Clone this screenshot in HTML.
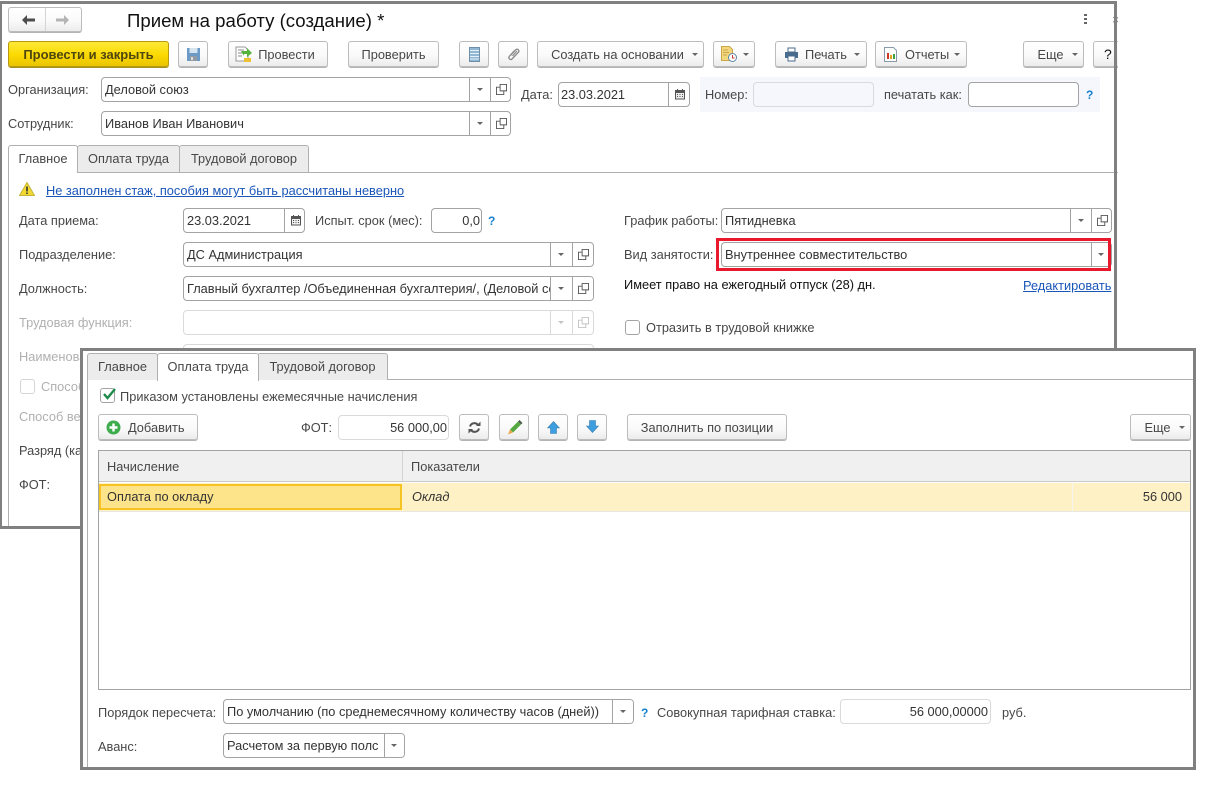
<!DOCTYPE html>
<html><head><meta charset="utf-8"><style>
html,body{margin:0;padding:0;background:#fff}
body{width:1214px;height:790px;position:relative;overflow:hidden;font-family:"Liberation Sans",sans-serif;font-size:12.800px;color:#474747}
div,span.a,svg.a{position:absolute;box-sizing:border-box}
.t{white-space:nowrap;line-height:16px;height:16px;margin-top:1px}
.d{color:#222}
.g{color:#b0b0b0}
.f{border:1px solid #a3a3a3;border-radius:4px;background:#fff;height:25px;color:#333;line-height:23px;padding-left:3px;white-space:nowrap;overflow:hidden}
.fd{border-color:#d9dadc}
.s{width:1px;top:0;bottom:0;background:#a3a3a3}
.fd .s{background:#d9dadc}
.ar{width:0;height:0;border-left:3px solid transparent;border-right:3px solid transparent;border-top:3px solid #666;top:10px}
.fd .ar{border-top-color:#c4c4c4}
.b{height:26px;border:1px solid #bcbcbc;border-radius:3px;background:linear-gradient(#fff,#fafafa 55%,#ececec);box-shadow:0 1px 0 #b4b4b4;line-height:25px;text-align:center;white-space:nowrap;color:#474747;top:41px}
.ba{width:0;height:0;border-left:3px solid transparent;border-right:3px solid transparent;border-top:3px solid #666;top:11px}
.tab{border:1px solid #b0b0b0;border-bottom:none;border-radius:3px 3px 0 0;background:#ececec;text-align:center;line-height:25px;height:27px;white-space:nowrap;color:#474747}
.act{background:#fff}
.lnk{color:#1a56b8;text-decoration:underline}
.q{color:#1581cf;font-weight:bold;font-size:12px}
svg{display:block}
</style></head><body>
<svg width="0" height="0" style="position:absolute"><defs>
<symbol id="op" viewBox="0 0 12 12"><path d="M4.500 .5h7v7h-7z M4.500 3.500h-4v8h8v-4" fill="none" stroke="#555" stroke-width="1"/></symbol>
<symbol id="cal" viewBox="0 0 12 12"><path d="M1 2h10v9.500h-10z" fill="#555"/><path d="M2 5h8v5.500h-8z" fill="#eee"/><path d="M3 1h1v2h-1zM8 1h1v2h-1z" fill="#555"/><path d="M3 6h1v1h-1zM5.500 6h1v1h-1zM8 6h1v1h-1zM3 8h1v1h-1zM5.500 8h1v1h-1zM8 8h1v1h-1z" fill="#555"/></symbol>
</defs></svg>

<!-- main window -->
<div style="left:0;top:0;width:1118px;height:529px;overflow:hidden;z-index:0">
<div class="b" style="left:8px;top:7px;width:74px;height:25px"><div style="left:36px;top:0;bottom:0;width:1px;background:#d4d4d4"></div>
<svg class="a" style="left:12px;top:6px" width="15" height="12"><path d="M1 6l5-5v3.500h8v3h-8v3.500z" fill="#4d4d4d"/></svg>
<svg class="a" style="left:46px;top:6px" width="15" height="12"><path d="M14 6l-5-5v3.500h-8v3h8v3.500z" fill="#b4b4b4"/></svg></div>
<div class="t" style="left:127px;top:9px;font-size:18.600px;line-height:22px;height:22px;color:#111">Прием на работу (создание) *</div>
<svg class="a" style="left:1083px;top:13px" width="5" height="12"><path d="M1 1h3v2h-3zM1 5h3v2h-3zM1 9h3v2h-3z" fill="#666"/></svg>
<div class="t" style="left:1112px;top:11px;color:#888">×</div>

<div class="b" style="left:8px;width:161px;background:linear-gradient(#fee93a,#fbd900 55%,#eac400);border-color:#b89a10;box-shadow:0 1px 0 #a89020;font-weight:bold;font-size:13px;color:#4f4610">Провести и закрыть</div>
<div class="b" style="left:178px;width:30px"><svg class="a" style="left:7px;top:5px" width="15" height="15"><path d="M1 1h13v13h-13z" fill="#6c9ac6"/><path d="M3.500 1h8v5h-8z" fill="#d6e4f0"/><path d="M4 9h7v5h-7z" fill="#8f9aa3"/><path d="M5 10h2v3h-2z" fill="#ddd"/></svg></div>
<div class="b" style="left:228px;width:100px;padding-left:17px"><svg class="a" style="left:6px;top:4px" width="17" height="17"><path d="M1 1h9l3 3v11h-12z" fill="#fff" stroke="#9a9a9a"/><path d="M3 4h6M3 7h5M3 10h4" stroke="#888"/><path d="M6 5h6v-3l5 5-5 4v-3h-3v2z" fill="#55b33c"/><path d="M9 12h7v4h-7z" fill="#eac234"/></svg>Провести</div>
<div class="b" style="left:348px;width:91px">Проверить</div>
<div class="b" style="left:459px;width:30px"><svg class="a" style="left:9px;top:5px" width="11" height="15"><path d="M.5 .5h10v14h-10z" fill="#90b8d4" stroke="#6f8fa8"/><path d="M1 3.500h9M1 6.500h9M1 9.500h9M1 12h9" stroke="#e6f0f6"/></svg></div>
<div class="b" style="left:498px;width:30px"><svg class="a" style="left:8px;top:5px" width="14" height="14"><path d="M3.500 8.500l5-5.500c2-2 4.500 .5 2.800 2.500l-6.300 6.500c-1.500 1.500-4-.5-2.800-2.500l5.300-6M5.500 9l4.500-5" fill="none" stroke="#8a8a8a" stroke-width="1.300"/></svg></div>
<div class="b" style="left:537px;width:167px;padding-right:6px">Создать на основании<div class="ba" style="left:154px"></div></div>
<div class="b" style="left:713px;width:42px"><svg class="a" style="left:7px;top:4px" width="16" height="16"><path d="M.5 .5h8l3 3v11h-11z" fill="#f3d77e" stroke="#c9a64a"/><path d="M2 4h5M2 6.500h6M2 9h4" stroke="#c9a64a"/><circle cx="11.500" cy="11.500" r="4" fill="#fff" stroke="#5f87a8"/><path d="M11.500 9v3h2" stroke="#c33" fill="none"/></svg><div class="ba" style="left:29px"></div></div>
<div class="b" style="left:775px;width:92px;text-align:left;padding-left:29px"><svg class="a" style="left:8px;top:5px" width="15" height="15"><path d="M4 1h7v4h-7z" fill="#fff" stroke="#4a6c8c"/><path d="M1 5h13v6h-13z" fill="#4a6c8c"/><path d="M4 9h7v5h-7z" fill="#fff" stroke="#4a6c8c"/></svg>Печать<div class="ba" style="left:78px"></div></div>
<div class="b" style="left:875px;width:92px;text-align:left;padding-left:29px"><svg class="a" style="left:8px;top:5px" width="14" height="15"><path d="M.5 .5h9l3 3v11h-12z" fill="#fff" stroke="#8a9aa8"/><path d="M3 6h2v6h-2z" fill="#cc3a2a"/><path d="M6 8h2v4h-2z" fill="#e0a020"/><path d="M9 7h2v5h-2z" fill="#3da23d"/></svg>Отчеты<div class="ba" style="left:78px"></div></div>
<div class="b" style="left:1023px;width:61px;padding-right:6px">Еще<div class="ba" style="left:48px"></div></div>
<div class="b" style="left:1093px;width:40px;text-align:left;padding-left:10px;color:#111;font-size:14px;">?</div>

<div class="t" style="left:8px;top:81px">Организация:</div>
<div class="f" style="left:101px;top:77px;width:410px">Деловой союз<div class="s" style="left:367px"></div><div class="ar" style="left:375px"></div><div class="s" style="left:388px"></div><svg class="a" style="left:394px;top:6px" width="11" height="11"><use href="#op"/></svg></div>
<div class="t" style="left:8px;top:115px">Сотрудник:</div>
<div class="f" style="left:101px;top:111px;width:410px">Иванов Иван Иванович<div class="s" style="left:367px"></div><div class="ar" style="left:375px"></div><div class="s" style="left:388px"></div><svg class="a" style="left:394px;top:6px" width="11" height="11"><use href="#op"/></svg></div>
<div class="t" style="left:521px;top:86px">Дата:</div>
<div class="f" style="left:558px;top:82px;width:132px;padding-left:2px">23.03.2021<div class="s" style="left:109px"></div><svg class="a" style="left:115px;top:5px" width="12" height="12"><use href="#cal"/></svg></div>
<div style="left:700px;top:77px;width:400px;height:35px;background:#f6f7fc"></div>
<div class="t" style="left:705px;top:86px">Номер:</div>
<div class="f fd" style="left:753px;top:82px;width:121px;background:#f6f7fc"></div>
<div class="t" style="left:884px;top:86px">печатать как:</div>
<div class="f" style="left:968px;top:82px;width:111px"></div>
<div class="t q" style="left:1086px;top:86px">?</div>

<div style="left:8px;top:172px;width:1110px;height:1px;background:#b0b0b0"></div>
<div style="left:8px;top:172px;width:1px;height:360px;background:#b0b0b0"></div>
<div class="tab act" style="left:8px;top:145px;width:70px;height:28px;z-index:2">Главное</div>
<div class="tab" style="left:77px;top:145px;width:103px">Оплата труда</div>
<div class="tab" style="left:179px;top:145px;width:130px">Трудовой договор</div>

<svg class="a" style="left:19px;top:182px" width="16" height="14"><path d="M8 .5l7.500 13h-15z" fill="#f2d930" stroke="#c4b33a"/><path d="M7.200 4.500h1.600v5h-1.600zM7.200 10.500h1.600v1.500h-1.600z" fill="#333"/></svg>
<div class="t lnk" style="left:46px;top:182px">Не заполнен стаж, пособия могут быть рассчитаны неверно</div>

<div class="t" style="left:19px;top:212px">Дата приема:</div>
<div class="f" style="left:183px;top:208px;width:122px">23.03.2021<div class="s" style="left:100px"></div><svg class="a" style="left:106px;top:5px" width="12" height="12"><use href="#cal"/></svg></div>
<div class="t" style="left:315px;top:212px">Испыт. срок (мес):</div>
<div class="f" style="left:431px;top:208px;width:51px;text-align:right;padding-right:1px">0,0</div>
<div class="t q" style="left:488px;top:212px">?</div>

<div class="t" style="left:19px;top:246px">Подразделение:</div>
<div class="f" style="left:183px;top:242px;width:411px">ДС Администрация<div class="s" style="left:366px"></div><div class="ar" style="left:374px"></div><div class="s" style="left:388px"></div><svg class="a" style="left:394px;top:6px" width="11" height="11"><use href="#op"/></svg></div>
<div class="t" style="left:19px;top:280px">Должность:</div>
<div class="f" style="left:183px;top:276px;width:411px">Главный бухгалтер /Объединенная бухгалтерия/, (Деловой союз)<div style="left:366px;top:0;bottom:0;width:44px;background:#fff"></div><div class="s" style="left:366px"></div><div class="ar" style="left:374px"></div><div class="s" style="left:388px"></div><svg class="a" style="left:394px;top:6px" width="11" height="11"><use href="#op"/></svg></div>
<div class="t g" style="left:19px;top:314px">Трудовая функция:</div>
<div class="f fd" style="left:183px;top:310px;width:411px"><div class="s" style="left:366px"></div><div class="ar" style="left:374px"></div><div class="s" style="left:388px"></div><svg class="a" style="left:394px;top:6px;opacity:.35" width="11" height="11"><use href="#op"/></svg></div>
<div class="t g" style="left:19px;top:348px">Наименование:</div>
<div class="f fd" style="left:183px;top:344px;width:411px"></div>
<div style="left:20px;top:379px;width:15px;height:15px;border:1px solid #d4d4d4;border-radius:3px"></div>
<div class="t g" style="left:41px;top:378px">Способ</div>
<div class="t g" style="left:19px;top:408px">Способ ве</div>
<div class="t" style="left:19px;top:442px">Разряд (ка</div>
<div class="t" style="left:19px;top:476px">ФОТ:</div>

<div class="t" style="left:624px;top:212px">График работы:</div>
<div class="f" style="left:721px;top:208px;width:391px">Пятидневка<div class="s" style="left:348px"></div><div class="ar" style="left:356px"></div><div class="s" style="left:369px"></div><svg class="a" style="left:375px;top:6px" width="11" height="11"><use href="#op"/></svg></div>
<div class="t" style="left:624px;top:246px">Вид занятости:</div>
<div class="f" style="left:721px;top:242px;width:391px">Внутреннее совместительство<div class="s" style="left:369px"></div><div class="ar" style="left:376px"></div></div>
<div style="left:716px;top:238px;width:395px;height:33px;border:3px solid #e8192c"></div>
<div class="t" style="left:624px;top:276px;color:#111">Имеет право на ежегодный отпуск (28) дн.</div>
<div class="t lnk" style="left:1023px;top:277px">Редактировать</div>
<div style="left:625px;top:320px;width:15px;height:15px;border:1px solid #a3a3a3;border-radius:3px"></div>
<div class="t" style="left:646px;top:319px">Отразить в трудовой книжке</div>

<div style="left:0;top:1px;width:1117px;height:528px;border:3px solid #808080;border-left-width:2px;z-index:3"></div>
</div>

<!-- popup -->
<div style="left:80px;top:348px;width:1116px;height:422px;background:#fff"></div>
<div style="left:87px;top:379px;width:1px;height:389px;background:#b0b0b0"></div>
<div style="left:87px;top:379px;width:1107px;height:1px;background:#b0b0b0"></div>
<div class="tab" style="left:87px;top:353px;width:71px">Главное</div>
<div class="tab" style="left:257px;top:353px;width:131px">Трудовой договор</div>
<div class="tab act" style="left:157px;top:353px;width:102px;height:28px">Оплата труда</div>

<div style="left:100px;top:388px;width:15px;height:15px;border:1px solid #a3a3a3;border-radius:3px"></div>
<svg class="a" style="left:101px;top:387px" width="16" height="15"><path d="M3 7l3.500 4L14 2" fill="none" stroke="#1e8a4a" stroke-width="2.400"/></svg>
<div class="t" style="left:120px;top:388px">Приказом установлены ежемесячные начисления</div>

<div class="b" style="left:98px;top:414px;width:100px;text-align:left;padding-left:29px"><svg class="a" style="left:7px;top:5px" width="15" height="15"><circle cx="7.500" cy="7.500" r="7" fill="#3eac4c"/><path d="M6.300 3.500h2.400v2.800h2.800v2.400h-2.800v2.800h-2.400v-2.800h-2.800v-2.400h2.800z" fill="#fff"/></svg>Добавить</div>
<div class="t" style="left:301px;top:419px">ФОТ:</div>
<div class="f fd" style="left:338px;top:415px;width:111px;text-align:right;padding-right:1px">56 000,00</div>
<div class="b" style="left:459px;top:414px;width:30px"><svg class="a" style="left:8px;top:6px" width="13" height="13"><path d="M2 5.500a4.500 4.500 0 0 1 8-1.500M11 7.500a4.500 4.500 0 0 1-8 1.500" fill="none" stroke="#555" stroke-width="2"/><path d="M8 5l4.500 0V.5zM5 8l-4.500 0v4.500z" fill="#555"/></svg></div>
<div class="b" style="left:499px;top:414px;width:30px"><svg class="a" style="left:7px;top:4px" width="16" height="16"><path d="M3 10.500l8-8 3 3-8 8z" fill="#54a83f"/><path d="M11 2.500l1.500-1.500 3 3-1.500 1.500z" fill="#4b5a4b"/><path d="M3 10.500l3 3-5 2z" fill="#e8a845"/></svg></div>
<div class="b" style="left:538px;top:414px;width:30px"><svg class="a" style="left:8px;top:6px" width="13" height="13"><path d="M6.500 .5l6 6.500h-3v5.500h-6v-5.500h-3z" fill="#3d9fdf" stroke="#3b7fae" stroke-width=".6"/></svg></div>
<div class="b" style="left:577px;top:414px;width:30px"><svg class="a" style="left:8px;top:5px" width="13" height="13"><path d="M6.500 12.500l6-6.500h-3v-5.500h-6v5.500h-3z" fill="#3d9fdf" stroke="#3b7fae" stroke-width=".6"/></svg></div>
<div class="b" style="left:627px;top:414px;width:160px">Заполнить по позиции</div>
<div class="b" style="left:1130px;top:414px;width:61px;padding-right:6px">Еще<div class="ba" style="left:48px"></div></div>

<div style="left:98px;top:450px;width:1093px;height:240px;border:1px solid #a3a3a3;background:#fff"></div>
<div style="left:99px;top:451px;width:1091px;height:30px;background:#f0f0f0"></div>
<div style="left:99px;top:481px;width:1091px;height:1px;background:#c8c8c8"></div>
<div style="left:402px;top:451px;width:1px;height:30px;background:#d4d4d4"></div>
<div class="t" style="left:107px;top:458px">Начисление</div>
<div class="t" style="left:411px;top:458px">Показатели</div>
<div style="left:99px;top:483px;width:1091px;height:28px;background:#fef1c6"></div>
<div style="left:99px;top:511px;width:1091px;height:1px;background:#e8e8e0"></div>
<div style="left:1072px;top:483px;width:1px;height:28px;background:#f5f5ee"></div>
<div style="left:99px;top:484px;width:303px;height:26px;background:#fde38a;border:2px solid #f5c424"></div>
<div class="t d" style="left:107px;top:488px;color:#333">Оплата по окладу</div>
<div class="t" style="left:412px;top:488px;font-style:italic;color:#333">Оклад</div>
<div class="t" style="right:32px;top:488px;color:#333">56 000</div>

<div class="t" style="left:98px;top:704px">Порядок пересчета:</div>
<div class="f" style="left:223px;top:699px;width:411px">По умолчанию (по среднемесячному количеству часов (дней))<div style="left:388px;top:0;bottom:0;width:22px;background:#fff"></div><div class="s" style="left:388px"></div><div class="ar" style="left:396px"></div></div>
<div class="t q" style="left:641px;top:704px">?</div>
<div class="t" style="left:657px;top:704px">Совокупная тарифная ставка:</div>
<div class="f fd" style="left:840px;top:699px;width:151px;text-align:right;padding-right:2px">56 000,00000</div>
<div class="t" style="left:1002px;top:704px">руб.</div>
<div class="t" style="left:98px;top:738px">Аванс:</div>
<div class="f" style="left:223px;top:733px;width:182px">Расчетом за первую полс<div style="left:160px;top:0;bottom:0;width:21px;background:#fff"></div><div class="s" style="left:160px"></div><div class="ar" style="left:167px"></div></div>

<div style="left:80px;top:348px;width:1116px;height:422px;border:3px solid #808080"></div>
</body></html>
